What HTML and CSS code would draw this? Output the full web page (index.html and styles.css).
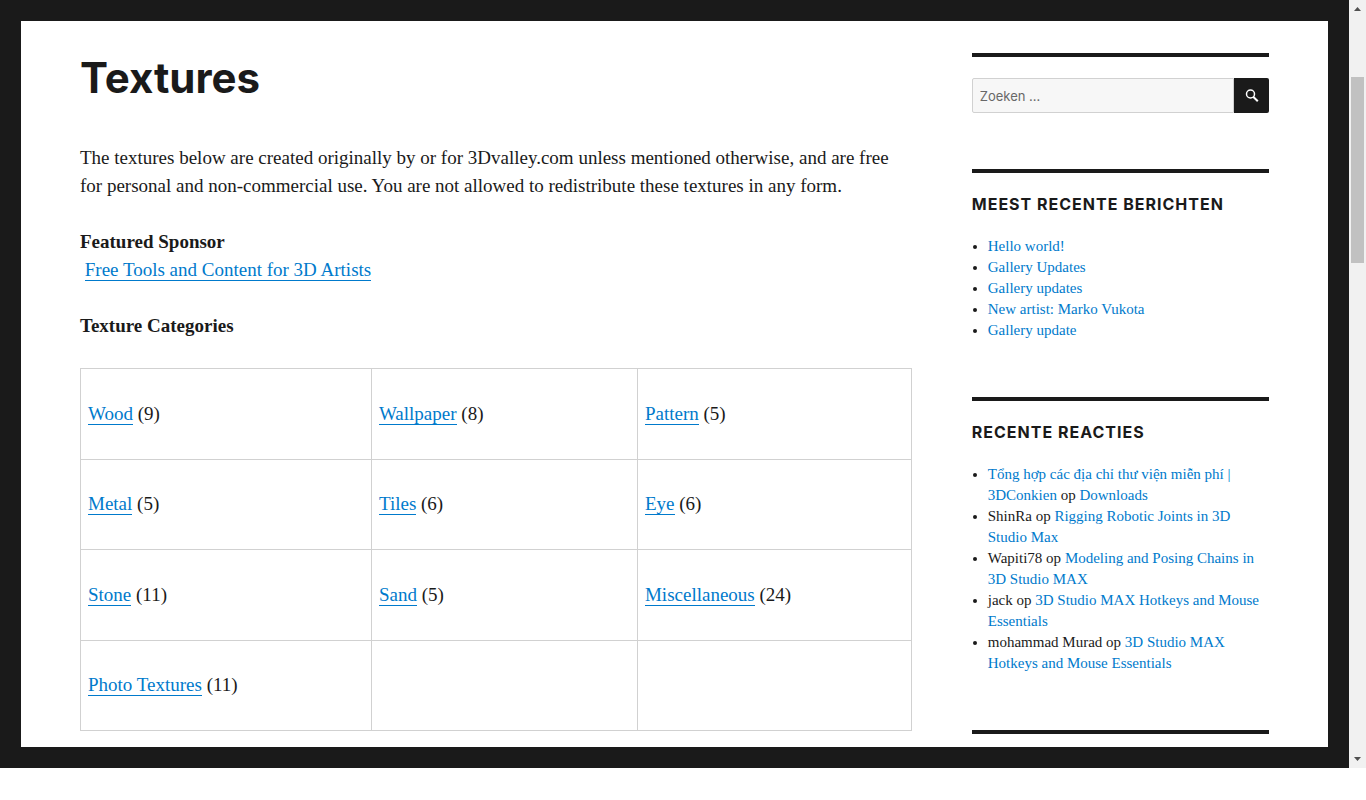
FILE: index.html
```html
<!DOCTYPE html>
<html lang="nl">
<head>
    <meta charset="UTF-8">
    <meta name="viewport" content="width=device-width, initial-scale=1.0">
    <title>Textures</title>
    <link rel="stylesheet" href="styles.css">
</head>
<body>
    <div class="window">
        <div class="page">
            <div class="site">
                <main class="content">
                    <h1>Textures</h1>
                    <p>The textures below are created originally by or for 3Dvalley.com unless mentioned otherwise, and are free for personal and non-commercial use. You are not allowed to redistribute these textures in any form.</p>
                    <p><strong>Featured Sponsor</strong><br>
                    &nbsp;<a href="#">Free Tools and Content for 3D Artists</a></p>
                    <p><strong>Texture Categories</strong></p>

                    <table class="categories">
                        <tbody>
                            <tr>
                                <td><a href="#">Wood</a> (9)</td>
                                <td><a href="#">Wallpaper</a> (8)</td>
                                <td><a href="#">Pattern</a> (5)</td>
                            </tr>
                            <tr>
                                <td><a href="#">Metal</a> (5)</td>
                                <td><a href="#">Tiles</a> (6)</td>
                                <td><a href="#">Eye</a> (6)</td>
                            </tr>
                            <tr>
                                <td><a href="#">Stone</a> (11)</td>
                                <td><a href="#">Sand</a> (5)</td>
                                <td><a href="#">Miscellaneous</a> (24)</td>
                            </tr>
                            <tr>
                                <td><a href="#">Photo Textures</a> (11)</td>
                                <td></td>
                                <td></td>
                            </tr>
                        </tbody>
                    </table>
                </main>

                <aside class="sidebar">
                    <section class="widget">
                        <form class="search">
                            <input type="search" name="s" placeholder="Zoeken …" aria-label="Zoeken">
                            <button type="button" aria-label="Zoeken">
                                <svg width="14" height="14" viewBox="0 0 14 14" fill="none" stroke="#fff">
                                    <circle cx="5.5" cy="5" r="4" stroke-width="1.5"/>
                                    <path d="M8.2 7.7L12.8 12.3" stroke-width="2"/>
                                </svg>
                            </button>
                        </form>
                    </section>

                    <section class="widget">
                        <h2>Meest recente berichten</h2>
                        <ul>
                            <li><a href="#">Hello world!</a></li>
                            <li><a href="#">Gallery Updates</a></li>
                            <li><a href="#">Gallery updates</a></li>
                            <li><a href="#">New artist: Marko Vukota</a></li>
                            <li><a href="#">Gallery update</a></li>
                        </ul>
                    </section>

                    <section class="widget">
                        <h2>Recente reacties</h2>
                        <ul>
                            <li><a href="#">Tổng hợp các địa chỉ thư viện miễn phí |<br>3DConkien</a> op <a href="#">Downloads</a></li>
                            <li>ShinRa op <a href="#">Rigging Robotic Joints in 3D<br>Studio Max</a></li>
                            <li>Wapiti78 op <a href="#">Modeling and Posing Chains in<br>3D Studio MAX</a></li>
                            <li>jack op <a href="#">3D Studio MAX Hotkeys and Mouse<br>Essentials</a></li>
                            <li>mohammad Murad op <a href="#">3D Studio MAX<br>Hotkeys and Mouse Essentials</a></li>
                        </ul>
                    </section>

                    <section class="widget"></section>
                </aside>
            </div>
        </div>

        <div class="scrollbar">
            <svg width="7" height="4" viewBox="0 0 7 4"><path d="M0 4L3.5 0L7 4Z" fill="#505050"/></svg>
            <div class="track"><div class="thumb"></div></div>
            <svg width="7" height="4" viewBox="0 0 7 4"><path d="M0 0L3.5 4L7 0Z" fill="#505050"/></svg>
        </div>
    </div>
</body>
</html>
```
FILE: styles.css
```css
* {
    box-sizing: border-box;
}
body {
    margin: 0;
    background: #fff;
    color: #1a1a1a;
    font-family: "Liberation Serif", serif;
    font-size: 19px;
    line-height: 28px;
}
a {
    color: #007acc;
    text-decoration: none;
}
.window {
    display: flex;
}
.page {
    flex: 1;
    background: #1a1a1a;
    padding: 21px;
}
.site {
    display: grid;
    grid-template-columns: 70% 25%;
    justify-content: space-between;
    background: #fff;
    padding: 32px 59px 13px;
}

/* content */
h1 {
    margin: 0 0 42px;
    font-family: Inter, sans-serif;
    font-size: 42px;
    font-weight: 700;
    line-height: 49px;
}
.content p {
    margin: 0 0 28px;
}
.content a {
    box-shadow: 0 1px 0 currentColor;
}
.categories {
    width: 100%;
    height: 363px;
    border-collapse: collapse;
    table-layout: fixed;
}
.categories td {
    width: 32%;
    border: 1px solid #d1d1d1;
    padding: 7px;
}
.categories td:first-child {
    width: 35%;
}
.categories td:last-child {
    width: 33%;
}

/* sidebar */
.widget {
    border-top: 4px solid #1a1a1a;
    padding-top: 21px;
    margin-bottom: 56px;
    font-size: 15px;
    line-height: 21px;
}
.widget:last-child {
    padding: 0;
    margin: 0;
}
.widget h2 {
    margin: 0 0 22px;
    font-family: Inter, sans-serif;
    font-size: 16px;
    font-weight: 700;
    line-height: 20px;
    letter-spacing: 1px;
    text-transform: uppercase;
}
.widget ul {
    margin: 0;
    padding-left: 16px;
}
.search {
    display: flex;
}
.search input {
    flex: 1;
    min-width: 0;
    height: 35px;
    border: 1px solid #d1d1d1;
    border-radius: 2px 0 0 2px;
    background: #f7f7f7;
    padding: 0 7px;
    font-family: Inter, sans-serif;
    font-size: 13px;
}
.search input::placeholder {
    color: #686868;
}
.search button {
    display: flex;
    align-items: center;
    justify-content: center;
    width: 35px;
    border: 0;
    border-radius: 0 2px 2px 0;
    background: #1a1a1a;
    padding: 0;
}

/* scrollbar */
.scrollbar {
    display: flex;
    flex-direction: column;
    align-items: center;
    width: 17px;
    background: #f1f1f1;
    padding: 7px 2px;
}
.track {
    flex: 1;
    width: 13px;
    padding: 66px 0;
}
.thumb {
    height: 186px;
    background: #c1c1c1;
}
```
